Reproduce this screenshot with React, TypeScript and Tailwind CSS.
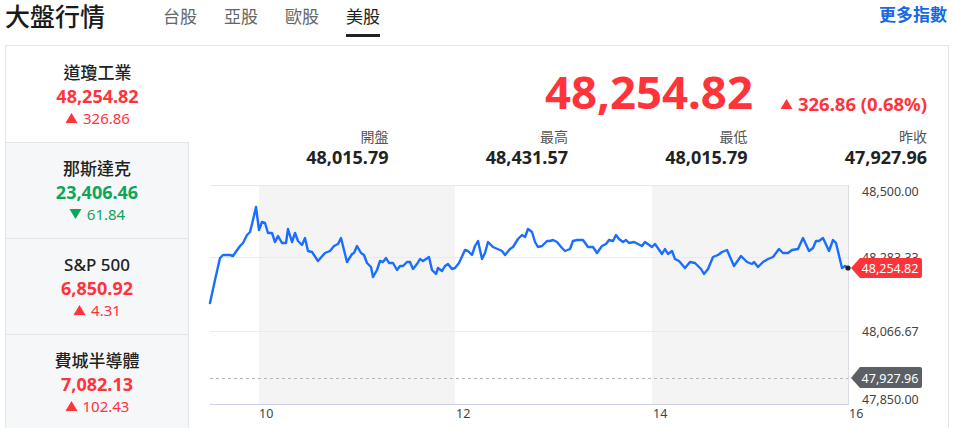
import React from 'react'

const FONT = "font-['Noto_Sans','Noto_Sans_CJK_TC',sans-serif]"

type Item = { name: string; value: string; change: string; up: boolean; active?: boolean }

const ITEMS: Item[] = [
  { name: '道瓊工業', value: '48,254.82', change: '326.86', up: true, active: true },
  { name: '那斯達克', value: '23,406.46', change: '61.84', up: false },
  { name: 'S&P 500', value: '6,850.92', change: '4.31', up: true },
  { name: '費城半導體', value: '7,082.13', change: '102.43', up: true },
]

const STATS = [
  { label: '開盤', value: '48,015.79' },
  { label: '最高', value: '48,431.57' },
  { label: '最低', value: '48,015.79' },
  { label: '昨收', value: '47,927.96' },
]

// intraday line, page coordinates
const LINE = [
  [210, 303], [215, 280], [220, 258], [223, 255], [230, 255], [233, 256], [240, 246], [243, 243],
  [247, 235], [250, 232], [253, 220], [256, 207], [259, 230], [262, 222], [265, 223], [268, 233],
  [272, 233], [275, 242], [278, 236], [282, 243], [286, 243], [288, 229], [292, 242], [295, 233],
  [298, 241], [302, 245], [305, 238], [308, 251], [312, 252], [318, 261], [325, 253], [330, 251],
  [334, 246], [338, 244], [341, 238], [344, 250], [347, 262], [352, 254], [354, 253], [357, 246],
  [361, 253], [364, 255], [367, 263], [371, 267], [373, 277], [377, 270], [380, 261], [383, 262],
  [386, 258], [389, 263], [393, 263], [397, 270], [400, 266], [403, 266], [407, 262], [410, 262],
  [413, 269], [417, 264], [420, 259], [423, 261], [429, 257], [432, 270], [436, 274], [438, 268],
  [442, 271], [445, 266], [448, 264], [452, 269], [455, 268], [459, 263], [465, 250], [468, 251],
  [472, 255], [475, 246], [478, 241], [482, 259], [485, 253], [488, 242], [493, 247], [502, 251],
  [505, 255], [510, 249], [513, 247], [518, 239], [522, 235], [525, 237], [528, 229], [532, 232],
  [535, 242], [538, 247], [542, 246], [547, 241], [550, 241], [553, 240], [557, 242], [562, 248],
  [565, 251], [570, 249], [573, 241], [577, 240], [583, 240], [588, 247], [593, 247], [597, 253],
  [602, 246], [606, 244], [609, 240], [613, 241], [616, 235], [619, 239], [623, 242], [626, 240],
  [629, 243], [634, 242], [638, 244], [642, 246], [645, 242], [652, 247], [655, 244], [662, 254],
  [665, 249], [668, 254], [672, 251], [675, 259], [679, 261], [685, 268], [690, 262], [695, 263],
  [701, 269], [704, 274], [708, 269], [713, 257], [718, 255], [722, 252], [727, 250], [734, 266],
  [741, 256], [747, 262], [752, 264], [754, 262], [758, 267], [763, 262], [768, 259], [773, 257],
  [779, 249], [783, 253], [788, 253], [792, 250], [798, 249], [803, 238], [809, 251], [813, 248],
  [816, 241], [819, 241], [823, 238], [829, 251], [833, 240], [836, 243], [842, 268], [845, 266],
  [848, 268],
]

function Triangle({ up, className }: { up: boolean; className: string }) {
  return (
    <svg viewBox="0 0 12 10" className={className}>
      {up ? <polygon points="6,0 12,10 0,10" fill="currentColor" /> : <polygon points="0,0 12,0 6,10" fill="currentColor" />}
    </svg>
  )
}

function Chart() {
  const pts = LINE.map((p) => p.join(',')).join(' ')
  return (
    <svg viewBox="189 168 759 260" width={759} height={260} className="block shrink-0">
      <rect x={259} y={185} width={196} height={219} fill="#f4f4f4" />
      <rect x={652} y={185} width={196} height={219} fill="#f4f4f4" />
      <line x1={210} x2={848} y1={185.5} y2={185.5} stroke="#e8e8e8" />
      <line x1={210} x2={848} y1={257.5} y2={257.5} stroke="#ebebeb" />
      <line x1={210} x2={848} y1={331.5} y2={331.5} stroke="#ebebeb" />
      <line x1={848.5} x2={848.5} y1={185} y2={404} stroke="#dcdce4" />
      <line x1={210} x2={848} y1={378.5} y2={378.5} stroke="#b5b5b5" strokeDasharray="3 3" />
      <line x1={210} x2={849} y1={404.5} y2={404.5} stroke="#ccd0e4" />
      <polyline points={pts} fill="none" stroke="#1a6eff" strokeWidth={2.4} strokeLinejoin="round" strokeLinecap="round" />
      <circle cx={848} cy={268} r={2.6} fill="#222" />

      <g fontSize={12.5} fill="#444" fontFamily="'Noto Sans', sans-serif">
        <text x={862} y={195.5}>48,500.00</text>
        <text x={862} y={261.5}>48,283.33</text>
        <text x={862} y={335.5}>48,066.67</text>
        <text x={862} y={403.5}>47,850.00</text>
        <text x={259} y={417.5}>10</text>
        <text x={456} y={417.5}>12</text>
        <text x={653} y={417.5}>14</text>
        <text x={849} y={417.5}>16</text>
      </g>

      <path d="M851,268 L860,258 L920,258 Q922,258 922,260 L922,276 Q922,278 920,278 L860,278 Z" fill="#ff333a" />
      <text x={890} y={272.5} fontSize={12.5} fill="#fff" textAnchor="middle" fontFamily="'Noto Sans', sans-serif">48,254.82</text>
      <path d="M851,378 L860,367 L920,367 Q922,367 922,369 L922,386 Q922,388 920,388 L860,388 Z" fill="#5c6065" />
      <text x={890} y={382.5} fontSize={12.5} fill="#fff" textAnchor="middle" fontFamily="'Noto Sans', sans-serif">47,927.96</text>
    </svg>
  )
}

export default function App() {
  return (
    <div className={`${FONT} w-[955px] h-[428px] overflow-hidden bg-white text-[#222]`}>
      {/* header */}
      <div className="flex items-start h-[45px]">
        <div className="pl-[5px] text-[25px] leading-[32px] font-medium text-[#1a1a1a]">大盤行情</div>
        <div className="flex gap-[27px] ml-[58px]">
          {['台股', '亞股', '歐股', '美股'].map((t) => (
            <div
              key={t}
              className={`h-[37px] flex items-center text-[17px] border-b-[3px] ${
                t === '美股' ? 'border-[#222] text-[#222]' : 'border-transparent text-[#666]'
              }`}
            >
              {t}
            </div>
          ))}
        </div>
        <div className="ml-auto pr-[8px] text-[17px] leading-[30px] font-semibold text-[#1668e3]">更多指數</div>
      </div>

      {/* body */}
      <div className="ml-[5px] w-[944px] border-t border-x border-[#e2e4e8] flex">
        <div className="w-[183px] flex flex-col">
          {ITEMS.map((it, i) => (
            <div
              key={it.name}
              className={`flex flex-col items-center justify-center border-b border-[#e2e4e8] ${
                i === 0 ? 'h-[97px] bg-white' : 'h-[96px] bg-[#f6f7f9] border-r'
              }`}
            >
              <div className="text-[17px] leading-[24px] font-medium text-[#222]">{it.name}</div>
              <div className={`text-[18px] leading-[23px] font-bold ${it.up ? 'text-[#ff333a]' : 'text-[#0ea55a]'}`}>
                {it.value}
              </div>
              <div className={`flex items-center gap-[5px] text-[15px] leading-[20px] ${it.up ? 'text-[#ff333a]' : 'text-[#0ea55a]'}`}>
                <Triangle up={it.up} className="w-[13px] h-[10px]" />
                {it.change}
              </div>
            </div>
          ))}
        </div>

        <div className="flex-1 flex flex-col">
          <div className="flex items-baseline justify-end pt-[23px] pr-[21px] h-[69px]">
            <div className="text-[45.5px] leading-none font-bold text-[#ff333a]">48,254.82</div>
            <div className="ml-[27px] flex items-center gap-[5px] text-[18.5px] leading-none font-bold text-[#ff333a]">
              <Triangle up className="w-[13px] h-[10px]" />
              326.86 (0.68%)
            </div>
          </div>
          <div className="grid grid-cols-4 ml-[20px] mr-[21px] mt-[13px]">
            {STATS.map((s) => (
              <div key={s.label} className="flex flex-col items-end">
                <div className="text-[14px] leading-[18px] text-[#555]">{s.label}</div>
                <div className="text-[18px] leading-[22px] font-bold text-[#222]">{s.value}</div>
              </div>
            ))}
          </div>
          <Chart />
        </div>
      </div>
    </div>
  )
}
